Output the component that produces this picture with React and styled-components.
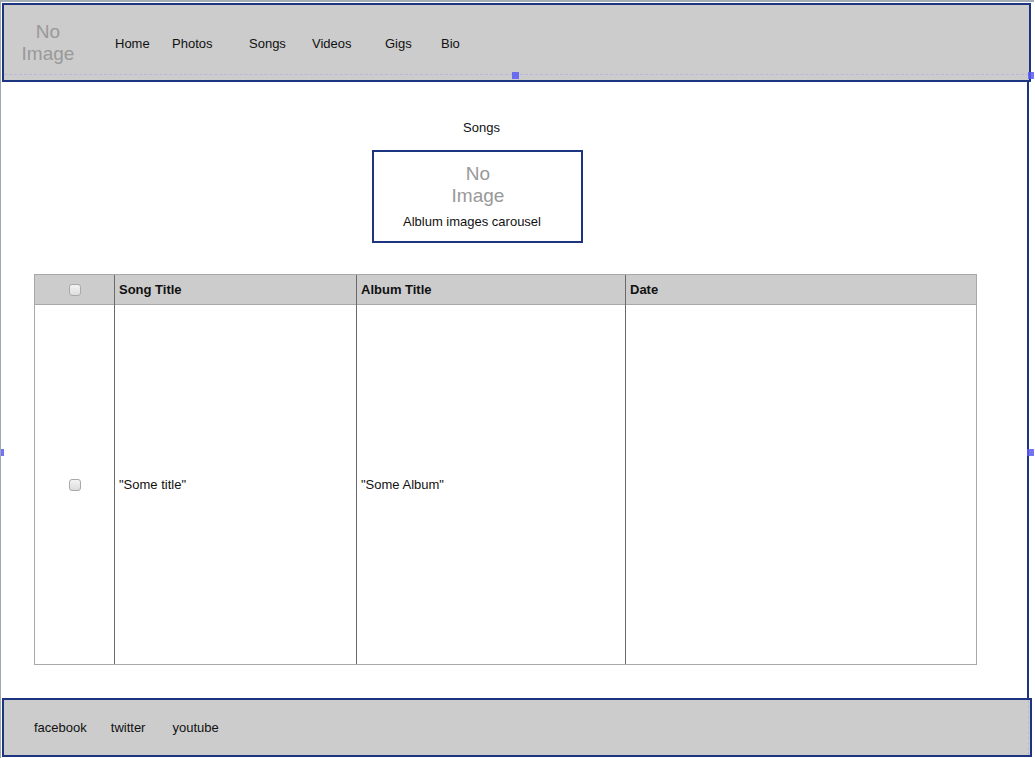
import React from "react";
import styled, { createGlobalStyle } from "styled-components";

const GlobalStyle = createGlobalStyle`
  html, body {
    margin: 0;
    padding: 0;
    background: #ffffff;
  }
  body {
    font-family: "Liberation Sans", Arial, sans-serif;
    font-size: 13px;
    color: #111;
  }
`;

const NAVY = "#1d3481";

const navItems = [
  { label: "Home", width: 57 },
  { label: "Photos", width: 77 },
  { label: "Songs", width: 63 },
  { label: "Videos", width: 73 },
  { label: "Gigs", width: 56 },
  { label: "Bio", width: 40 },
];

const socialLinks = ["facebook", "twitter", "youtube"];

const App = () => {
  return (
    <>
      <GlobalStyle />
      <Canvas>
        <Header>
          <Logo>
            No
            <br />
            Image
          </Logo>
          <Nav>
            {navItems.map((item) => (
              <NavLink key={item.label} $width={item.width}>
                {item.label}
              </NavLink>
            ))}
          </Nav>
          <GuideLine />
          <Handle $left={508} $top={67} />
          <Handle $left={1024} $top={67} />
        </Header>

        <Main>
          <Intro>
            <PageTitle>Songs</PageTitle>
            <Carousel>
              <Placeholder>
                No
                <br />
                Image
              </Placeholder>
              <Caption>Alblum images carousel</Caption>
            </Carousel>
          </Intro>

          <SongTable>
            <colgroup>
              <col style={{ width: 80 }} />
              <col style={{ width: 242 }} />
              <col style={{ width: 269 }} />
              <col style={{ width: 351 }} />
            </colgroup>
            <thead>
              <tr>
                <HeadCell $center>
                  <Check type="checkbox" />
                </HeadCell>
                <HeadCell>Song Title</HeadCell>
                <HeadCell>Album Title</HeadCell>
                <HeadCell>Date</HeadCell>
              </tr>
            </thead>
            <tbody>
              <tr>
                <BodyCell $center>
                  <Check type="checkbox" />
                </BodyCell>
                <BodyCell>"Some title"</BodyCell>
                <BodyCell>"Some Album"</BodyCell>
                <BodyCell />
              </tr>
            </tbody>
          </SongTable>
          <Handle $left={-4} $top={367} />
          <Handle $left={1026} $top={367} />
        </Main>

        <Footer>
          {socialLinks.map((name) => (
            <FooterLink key={name}>{name}</FooterLink>
          ))}
          <FooterGuide />
        </Footer>
      </Canvas>
    </>
  );
};

const Canvas = styled.div`
  width: 1034px;
  height: 758px;
  box-sizing: border-box;
  border-top: 2px solid #a4adb6;
  border-left: 1px solid #9ea8b2;
  display: flex;
  flex-direction: column;
  overflow: hidden;
  position: relative;
`;

const Header = styled.header`
  position: relative;
  margin: 1px 0 0 1px;
  width: 1029px;
  height: 79px;
  box-sizing: border-box;
  border: 2px solid ${NAVY};
  background: #cccccc;
  display: flex;
  align-items: center;
`;

const Logo = styled.div`
  width: 88px;
  text-align: center;
  color: #999999;
  font-size: 19px;
  line-height: 22px;
`;

const Nav = styled.nav`
  display: flex;
  align-items: center;
  padding-left: 23px;
  margin-top: 1px;
`;

const NavLink = styled.span`
  width: ${(p) => p.$width}px;
  font-size: 13px;
  color: #111;
  white-space: nowrap;
`;

const GuideLine = styled.div`
  position: absolute;
  left: 0;
  right: 0;
  top: 69px;
  border-top: 1px dashed #b8b8dc;
`;

const Handle = styled.div`
  position: absolute;
  left: ${(p) => p.$left}px;
  top: ${(p) => p.$top}px;
  width: 7px;
  height: 7px;
  background: rgba(90, 90, 245, 0.85);
  z-index: 2;
`;

const Main = styled.main`
  position: relative;
  width: 1028px;
  height: 616px;
  box-sizing: border-box;
  border-right: 2px solid ${NAVY};
  background: #ffffff;
  padding: 38px 0 0 33px;
`;

const Intro = styled.div`
  width: 886px;
  display: flex;
  flex-direction: column;
  align-items: center;
`;

const PageTitle = styled.div`
  font-size: 13px;
  line-height: 16px;
  margin-left: 9px;
`;

const Carousel = styled.div`
  margin-top: 14px;
  width: 211px;
  height: 93px;
  box-sizing: border-box;
  border: 2px solid ${NAVY};
  display: flex;
  flex-direction: column;
  align-items: center;
  padding-top: 11px;
`;

const Placeholder = styled.div`
  color: #999999;
  font-size: 19px;
  line-height: 22px;
  text-align: center;
  margin-left: 2px;
`;

const Caption = styled.div`
  font-size: 13px;
  line-height: 16px;
  margin-top: 7px;
  margin-right: 10px;
`;

const SongTable = styled.table`
  margin-top: 31px;
  width: 943px;
  border-collapse: collapse;
  table-layout: fixed;
  border: 1px solid #a8a8a8;
`;

const HeadCell = styled.th`
  height: 29px;
  padding: 0 4px;
  background: #cccccc;
  font-weight: bold;
  font-size: 13px;
  text-align: ${(p) => (p.$center ? "center" : "left")};
  border-top: 1px solid #a8a8a8;
  border-left: 1px solid #6a6a6a;
  &:first-child {
    border-left: 1px solid #a8a8a8;
  }
`;

const BodyCell = styled.td`
  height: 359px;
  padding: 0 4px;
  font-size: 13px;
  vertical-align: middle;
  text-align: ${(p) => (p.$center ? "center" : "left")};
  border-top: 1px solid #a8a8a8;
  border-bottom: 1px solid #a8a8a8;
  border-left: 1px solid #6a6a6a;
  &:first-child {
    border-left: 1px solid #a8a8a8;
  }
`;

const Check = styled.input`
  appearance: none;
  display: block;
  margin: 0 auto;
  width: 12px;
  height: 12px;
  border: 1px solid #a9a9a9;
  border-radius: 3px;
  background: linear-gradient(#f4f4f4, #dcdcdc);
`;

const Footer = styled.footer`
  position: relative;
  margin-left: 1px;
  width: 1030px;
  height: 59px;
  box-sizing: border-box;
  border: 2px solid ${NAVY};
  background: #cccccc;
  display: flex;
  align-items: center;
  gap: 24px;
  padding-left: 30px;
`;

const FooterLink = styled.span`
  font-size: 13px;
  color: #111;
  & + & + & {
    margin-left: 3px;
  }
`;

const FooterGuide = styled.div`
  position: absolute;
  top: 0;
  bottom: 0;
  right: 1px;
  border-right: 1px dashed #b8b8dc;
`;

export default App;
